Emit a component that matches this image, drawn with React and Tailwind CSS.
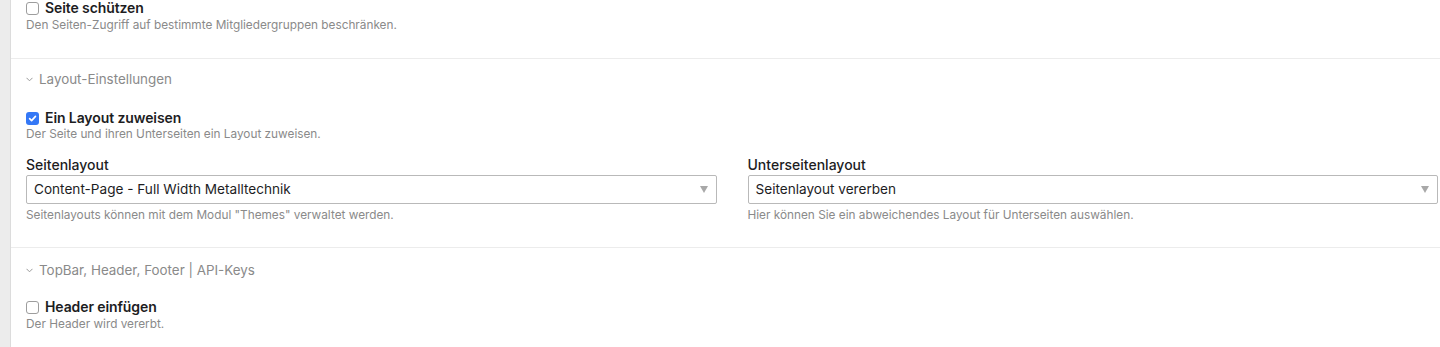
import { useState } from 'react'

const FONT = { fontFamily: 'Inter, "Liberation Sans", sans-serif' }

function Check({ checked, onChange, label }) {
  return (
    <label className="flex items-center gap-[6px] cursor-pointer">
      <span
        onClick={onChange}
        className={`w-[13px] h-[13px] rounded-[3px] flex items-center justify-center shrink-0 ${
          checked ? 'bg-[#3478f6]' : 'bg-white border border-[#9d9d9d]'
        }`}
      >
        {checked && (
          <svg width="9" height="9" viewBox="0 0 10 10" fill="none" stroke="white" strokeWidth="1.8" strokeLinecap="round" strokeLinejoin="round">
            <path d="M1.8 5.2 4 7.4 8.3 2.6" />
          </svg>
        )}
      </span>
      <span className="text-[14px] leading-[16px] font-semibold text-[#1d1d1f] tracking-[-0.1px]">{label}</span>
    </label>
  )
}

function Section({ title }) {
  return (
    <div className="flex items-center gap-[6px] text-[13.4px] leading-[16px] text-[#8a8a8a]">
      <svg width="7" height="5" viewBox="0 0 7 5" fill="none" stroke="#9a9a9a" strokeWidth="1">
        <path d="M0.5 0.8 3.5 3.8 6.5 0.8" />
      </svg>
      {title}
    </div>
  )
}

function Select({ label, value, help }) {
  return (
    <div>
      <div className="text-[14px] leading-[16px] font-medium text-[#1d1d1f] mb-[2px]">{label}</div>
      <div className="h-[29px] border border-[#b9b9b9] rounded-[2px] bg-white flex items-center justify-between pl-[7px] pr-[8px]">
        <span className="text-[13.6px] text-[#1d1d1f]">{value}</span>
        <svg width="8" height="7" viewBox="0 0 8 7"><path d="M0 0h8L4 7z" fill="#a8a8a8" /></svg>
      </div>
      <div className="text-[11.8px] leading-[14px] text-[#8a8a8a] mt-[4px]">{help}</div>
    </div>
  )
}

export default function App() {
  const [protect, setProtect] = useState(false)
  const [layout, setLayout] = useState(true)
  const [header, setHeader] = useState(false)

  return (
    <div style={FONT} className="flex h-[347px] bg-white overflow-hidden">
      {/* sidebar strip */}
      <div className="w-[11px] shrink-0 bg-[#ececec] border-r border-[#dcdcdc]" />

      <div className="flex-1 min-w-0">
        {/* Page protection */}
        <div className="pl-[15px] pt-[0px] pb-[26px] border-b border-[#ececec]">
          <Check checked={protect} onChange={() => setProtect(p => !p)} label="Seite schützen" />
          <div className="text-[11.8px] leading-[14px] text-[#8a8a8a] mt-[2px]">
            Den Seiten-Zugriff auf bestimmte Mitgliedergruppen beschränken.
          </div>
        </div>

        {/* Layout settings */}
        <div className="pl-[15px] pr-[2px] pt-[12px] pb-[25px] border-b border-[#ececec]">
          <Section title="Layout-Einstellungen" />
          <div className="mt-[23px]">
            <Check checked={layout} onChange={() => setLayout(l => !l)} label="Ein Layout zuweisen" />
            <div className="text-[11.8px] leading-[14px] text-[#8a8a8a] mt-[1px]">
              Der Seite und ihren Unterseiten ein Layout zuweisen.
            </div>
          </div>
          <div className="grid grid-cols-2 gap-[31px] mt-[16px]">
            <Select
              label="Seitenlayout"
              value="Content-Page - Full Width Metalltechnik"
              help={'Seitenlayouts können mit dem Modul "Themes" verwaltet werden.'}
            />
            <Select
              label="Unterseitenlayout"
              value="Seitenlayout vererben"
              help="Hier können Sie ein abweichendes Layout für Unterseiten auswählen."
            />
          </div>
        </div>

        {/* TopBar etc */}
        <div className="pl-[15px] pt-[14px]">
          <Section title="TopBar, Header, Footer | API-Keys" />
          <div className="mt-[21px]">
            <Check checked={header} onChange={() => setHeader(h => !h)} label="Header einfügen" />
            <div className="text-[11.8px] leading-[14px] text-[#8a8a8a] mt-[2px]">Der Header wird vererbt.</div>
          </div>
        </div>
      </div>
    </div>
  )
}
